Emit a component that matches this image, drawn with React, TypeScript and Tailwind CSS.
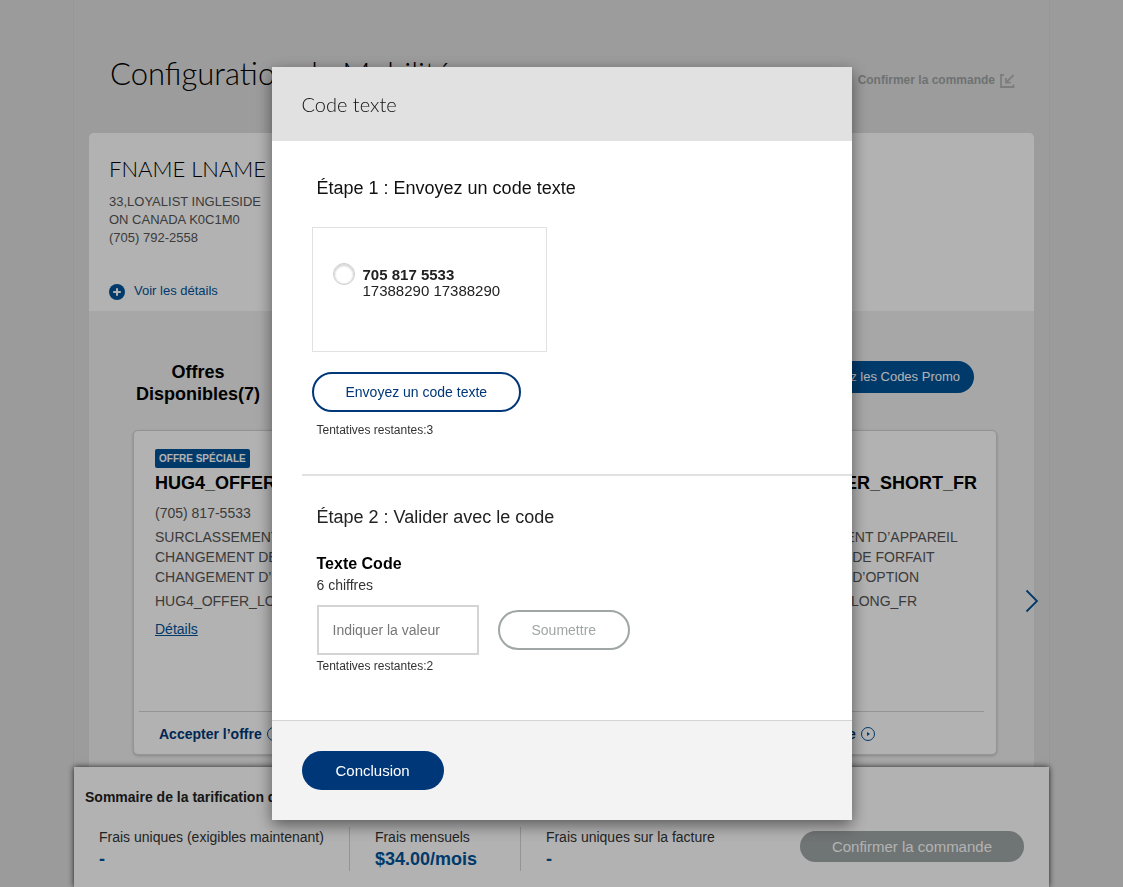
import React from "react";

type CardProps = { special?: boolean };

function OfferCard({ special }: CardProps) {
  return (
    <article className="flex h-[325px] flex-col rounded-[5px] border border-[#d4d4d4] bg-white pt-[18px] shadow-[0_1px_3px_rgba(0,0,0,0.2)]">
      <div className="flex-1 px-[21px]">
        <div className="h-[19px]">
          {special && (
            <span className="block w-fit rounded-[2px] bg-[#00549a] px-1 text-[10px] leading-[19px] font-bold text-white">
              OFFRE SPÉCIALE
            </span>
          )}
        </div>
        <h3 className="mt-1 text-[18px] leading-[22px] font-bold text-black">HUG4_OFFER_SHORT_FR</h3>
        <p className="mt-[9px] text-sm text-[#555555]">(705) 817-5533</p>
        <p className="mt-1 text-sm text-[#555555]">
          SURCLASSEMENT D’APPAREIL
          <br />
          CHANGEMENT DE FORFAIT
          <br />
          CHANGEMENT D’OPTION
        </p>
        <p className="mt-1 text-sm text-[#555555]">HUG4_OFFER_LONG_FR</p>
        <a href="#details" className="mt-2 inline-block text-sm text-[#00549a] underline">
          Détails
        </a>
      </div>
      <div className="mr-3 ml-[5px] h-[43px] border-t border-[#d4d4d4] pl-5">
        <a href="#accepter" className="flex h-11 items-center gap-1 text-sm font-bold text-[#003778]">
          Accepter l’offre
          <svg className="h-4 w-4" viewBox="0 0 16 16" fill="none">
            <circle cx="8" cy="8" r="6.5" stroke="#00549a" />
            <path d="M7 5.9 10 8 7 10.1Z" fill="#00549a" />
          </svg>
        </a>
      </div>
    </article>
  );
}

type FeeProps = { label: string; value: string };

function Fee({ label, value }: FeeProps) {
  return (
    <div className="min-w-[171px] border-r border-[#d4d4d4] pr-[25px] pl-[25px] first:pl-0 last:border-r-0">
      <div className="text-sm text-[#333333]">{label}</div>
      <div className="text-[18px] leading-6 font-bold text-[#00549a]">{value}</div>
    </div>
  );
}

export default function App() {
  return (
    <div className="min-h-screen bg-[#dfdfdf] font-['Liberation_Sans',Arial,sans-serif]">
      <div className="mx-auto flex min-h-screen max-w-[975px] flex-col bg-[#e0e0e0] shadow-[0_0_1px_rgba(0,0,0,0.15)]">
        <header className="flex h-[133px] items-start justify-between pr-[34px] pl-9">
          <h1 className="pt-[53px] font-['Lato',sans-serif] text-[31px] leading-10 font-light text-black">
            Configuration de Mobilité
          </h1>
          <a href="#confirmer" className="mt-[70px] flex items-center gap-1 text-xs leading-5 font-bold text-[#9da4a4]">
            Confirmer la commande
            <svg className="mt-[2px] h-4 w-4" viewBox="0 0 16 16" fill="none" stroke="#b4b4b4" strokeWidth="1.8">
              <path d="M5 2H2V14H14.5V11.5" />
              <path d="M14.6 2 8 8.6M7 5V9.6H11.8" />
            </svg>
          </a>
        </header>

        <main className="mx-[15px] flex flex-1 flex-col rounded-t-[5px] bg-[#f0f0f0]">
          <section className="h-[178px] rounded-t-[5px] bg-white px-5 pt-5">
            <h2 className="font-['Lato',sans-serif] text-[22px] leading-8 font-light text-black">FNAME LNAME</h2>
            <p className="mt-2 text-[13px] leading-[18px] text-[#555555]">
              33,LOYALIST INGLESIDE
              <br />
              ON CANADA K0C1M0
              <br />
              (705) 792-2558
            </p>
            <a href="#voir" className="mt-[34px] flex items-center gap-[9px] text-[13px] leading-5 text-[#00549a]">
              <svg className="mt-[2px] h-4 w-4" viewBox="0 0 16 16">
                <circle cx="8" cy="8" r="8" fill="#00549a" />
                <path d="M8 4.2V11.8M4.2 8H11.8" stroke="#fff" strokeWidth="2" />
              </svg>
              Voir les détails
            </a>
          </section>

          <section className="flex flex-1 flex-col pb-3">
            <div className="flex items-start justify-between pt-[50px] pr-[60px] pl-11">
              <h2 className="w-[130px] text-center text-[18px] leading-[22px] font-bold text-black">
                Offres Disponibles(7)
              </h2>
              <button className="h-8 rounded-full bg-[#00549a] px-[14px] text-[13px] text-white">
                Utilisez les Codes Promo
              </button>
            </div>
            <div className="mt-[25px] flex items-center pl-11">
              <div className="grid flex-1 grid-cols-3 gap-[27px]">
                <OfferCard special />
                <div className="col-start-3">
                  <OfferCard />
                </div>
              </div>
              <button aria-label="Suivant" className="mt-4 -mr-[5px] ml-7 h-6 w-[14px]">
                <svg className="h-6 w-[14px]" viewBox="0 0 14 24" fill="none" stroke="#00549a" strokeWidth="1.8">
                  <path d="M1.5 1.5 12 12 1.5 22.5" />
                </svg>
              </button>
            </div>
          </section>
        </main>

        <footer className="relative h-[120px] bg-white px-[11px] pt-5 shadow-[0_0_6px_rgba(0,0,0,0.8)]">
          <h2 className="text-sm leading-5 font-bold text-[#222222]">
            Sommaire de la tarification de la commande
          </h2>
          <div className="mt-5 flex items-start justify-between pr-[14px] pl-[14px]">
            <div className="flex">
              <Fee label="Frais uniques (exigibles maintenant)" value="-" />
              <Fee label="Frais mensuels" value="$34.00/mois" />
              <Fee label="Frais uniques sur la facture" value="-" />
            </div>
            <button className="mt-1 h-[31px] rounded-full bg-[#a0a6a6] px-8 pt-[2px] text-[15px] text-white">
              Confirmer la commande
            </button>
          </div>
        </footer>
      </div>

      <div className="fixed inset-0 flex items-center justify-center bg-black/30">
        <div
          role="dialog"
          aria-labelledby="dialog-title"
          className="w-[580px] max-w-full bg-white shadow-[0_5px_15px_rgba(0,0,0,0.5)]"
        >
          <header className="bg-[#e1e1e1] px-[30px] py-[22px]">
            <h2 id="dialog-title" className="font-['Lato',sans-serif] text-[20px] leading-[30px] font-light text-[#111111]">
              Code texte
            </h2>
          </header>

          <section className="px-10 pt-[35px] pb-[34px]">
            <h3 className="pl-[5px] text-[18px] leading-6 text-[#111111]">Étape 1 : Envoyez un code texte</h3>
            <label className="mt-[27px] flex h-[125px] w-[235px] items-start gap-2 border border-[#e1e1e1] pt-[35px] pl-5 text-[15px] leading-4 text-[#222222]">
              <input
                type="radio"
                name="phone"
                className="h-[22px] w-[22px] appearance-none rounded-full border border-[#cccccc] bg-white shadow-[inset_0_1px_2px_1px_rgba(0,0,0,0.16)]"
              />
              <span className="pt-1">
                <b>705 817 5533</b>
                <br />
                17388290 17388290
              </span>
            </label>
            <button className="mt-5 block h-10 rounded-full border-2 border-[#003778] px-8 text-sm text-[#003778]">
              Envoyez un code texte
            </button>
            <p className="mt-2 pl-[5px] text-xs leading-5 text-[#333333]">Tentatives restantes:3</p>
          </section>

          <hr className="ml-[30px] border-t-2 border-[#e1e1e1]" />

          <section className="px-[45px] pt-[29px] pb-[43px]">
            <h3 className="text-[18px] leading-6 text-[#222222]">Étape 2 : Valider avec le code</h3>
            <label htmlFor="code" className="mt-[25px] block text-base leading-5 font-bold text-black">
              Texte Code
            </label>
            <p className="text-sm leading-[22px] text-[#333333]">6 chiffres</p>
            <div className="mt-[9px] flex items-center gap-[19px]">
              <input
                id="code"
                type="text"
                placeholder="Indiquer la valeur"
                className="h-[50px] w-[162px] border-2 border-[#d4d4d4] px-[14px] text-sm text-[#333333] placeholder:text-[#777777]"
              />
              <button className="h-10 rounded-full border-2 border-[#a0a6a6] px-8 text-sm text-[#a0a6a6]">
                Soumettre
              </button>
            </div>
            <p className="text-xs leading-[22px] text-[#333333]">Tentatives restantes:2</p>
          </section>

          <footer className="border-t border-[#d4d4d4] bg-[#f3f3f3] px-[30px] pt-[30px] pb-[30px]">
            <button className="block h-[39px] rounded-full bg-[#003778] px-[34px] pt-[2px] text-[15px] text-white">
              Conclusion
            </button>
          </footer>
        </div>
      </div>
    </div>
  );
}
